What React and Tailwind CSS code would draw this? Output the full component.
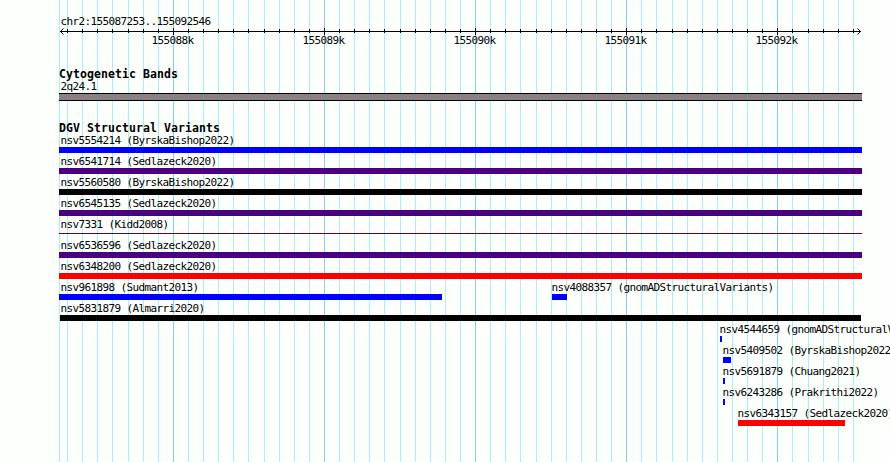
import React from 'react';

const START = 59;
const MINOR = [
  59, 67, 82, 97, 112, 128, 143, 158, 188, 203, 218, 233, 248, 264, 279, 294, 309,
  339, 354, 369, 384, 400, 415, 430, 445, 460, 490, 505, 520, 536, 551, 566, 581, 596, 611,
  641, 656, 672, 687, 702, 717, 732, 747, 762, 792, 808, 823, 838, 853,
];
const MAJOR = [
  { x: 173, label: '155088k' },
  { x: 324, label: '155089k' },
  { x: 475, label: '155090k' },
  { x: 626, label: '155091k' },
  { x: 777, label: '155092k' },
];

// each row holds one or more variants, start/end in track pixels
const ROWS = [
  [{ name: 'nsv5554214 (ByrskaBishop2022)', start: 59, end: 862, color: 'bg-[#0000ff]' }],
  [{ name: 'nsv6541714 (Sedlazeck2020)', start: 59, end: 862, color: 'bg-[#4b0082]' }],
  [{ name: 'nsv5560580 (ByrskaBishop2022)', start: 59, end: 862, color: 'bg-black' }],
  [{ name: 'nsv6545135 (Sedlazeck2020)', start: 59, end: 862, color: 'bg-[#4b0082]' }],
  [{ name: 'nsv7331 (Kidd2008)', start: 59, end: 862, color: 'bg-[#4b0082]', thin: true }],
  [{ name: 'nsv6536596 (Sedlazeck2020)', start: 59, end: 862, color: 'bg-[#4b0082]' }],
  [{ name: 'nsv6348200 (Sedlazeck2020)', start: 59, end: 862, color: 'bg-[#ff0000]' }],
  [
    { name: 'nsv961898 (Sudmant2013)', start: 59, end: 442, color: 'bg-[#0000ff]' },
    { name: 'nsv4088357 (gnomADStructuralVariants)', start: 552, end: 567, color: 'bg-[#0000ff]' },
  ],
  [{ name: 'nsv5831879 (Almarri2020)', start: 60, end: 861, color: 'bg-black' }],
  [{ name: 'nsv4544659 (gnomADStructuralVariants)', start: 720, end: 722, color: 'bg-[#0000ff]' }],
  [{ name: 'nsv5409502 (ByrskaBishop2022)', start: 723, end: 731, color: 'bg-[#0000ff]' }],
  [{ name: 'nsv5691879 (Chuang2021)', start: 723, end: 725, color: 'bg-[#0000ff]' }],
  [{ name: 'nsv6243286 (Prakrithi2022)', start: 723, end: 725, color: 'bg-[#0000ff]' }],
  [{ name: 'nsv6343157 (Sedlazeck2020)', start: 738, end: 845, color: 'bg-[#ff0000]' }],
];

function GridLines() {
  return (
    <svg className="absolute inset-0" width="890" height="462" shapeRendering="crispEdges">
      {MINOR.map(x => <rect key={x} x={x} y="0" width="1" height="462" fill="#afeeee" />)}
      {MAJOR.map(m => <rect key={m.x} x={m.x} y="0" width="1" height="462" fill="#87ceeb" />)}
    </svg>
  );
}

function Ruler() {
  return (
    <svg className="block shrink-0" width="890" height="8" viewBox="0 28 890 8" shapeRendering="crispEdges">
      <rect x="60" y="31" width="801" height="1" />
      {MINOR.filter(x => x > START).map(x => <rect key={x} x={x} y="29" width="1" height="4" />)}
      {MAJOR.map(m => <rect key={m.x} x={m.x} y="28" width="1" height="7" />)}
      <path d="M63.5 28.5L60.5 31.5L63.5 34.5M857.5 28.5L860.5 31.5L857.5 34.5" fill="none" stroke="black" shapeRendering="auto" />
    </svg>
  );
}

function Row({ items }) {
  return (
    <div className="grid h-[21px] shrink-0">
      {items.map(v => (
        <div key={v.name} className="col-start-1 row-start-1 w-max" style={{ marginLeft: v.start }}>
          {/* labels never start left of the track edge */}
          <div className="h-3" style={{ marginLeft: Math.max(60.5 - v.start, -0.5) }}>{v.name}</div>
          <div className={v.thin ? 'h-1.5 pt-0.5' : 'h-1.5'}>
            <div className={`${v.color} ${v.thin ? 'h-px' : 'h-1.5'}`} style={{ width: v.end - v.start }} />
          </div>
        </div>
      ))}
    </div>
  );
}

export default function App() {
  return (
    <div className="relative h-[462px] w-[890px] overflow-hidden bg-[#fdfffd] font-['DejaVu_Sans_Mono',monospace] text-[11px] leading-3 tracking-[-0.622px] whitespace-pre text-black">
      <GridLines />
      <div className="relative flex flex-col pt-4">
        <div className="h-3 pl-[60.5px]">chr2:155087253..155092546</div>
        <Ruler />
        <div className="-mt-px flex h-3 pl-[151.5px]">
          {MAJOR.map(m => <div key={m.x} className="w-[151px] shrink-0">{m.label}</div>)}
        </div>

        <div className="mt-[21px] h-[13px] pl-[59px] text-[11.5px] leading-3 font-bold tracking-[0.077px]">Cytogenetic Bands</div>
        <div className="h-3 pl-[60.5px]">2q24.1</div>
        <div className="ml-[59px] h-2 w-[803px] border-y border-black bg-[#868286]" />

        <div className="mt-[21px] h-[13px] pl-[59px] text-[11.5px] leading-3 font-bold tracking-[0.077px]">DGV Structural Variants</div>
        {ROWS.map(items => <Row key={items[0].name} items={items} />)}
      </div>
    </div>
  );
}
